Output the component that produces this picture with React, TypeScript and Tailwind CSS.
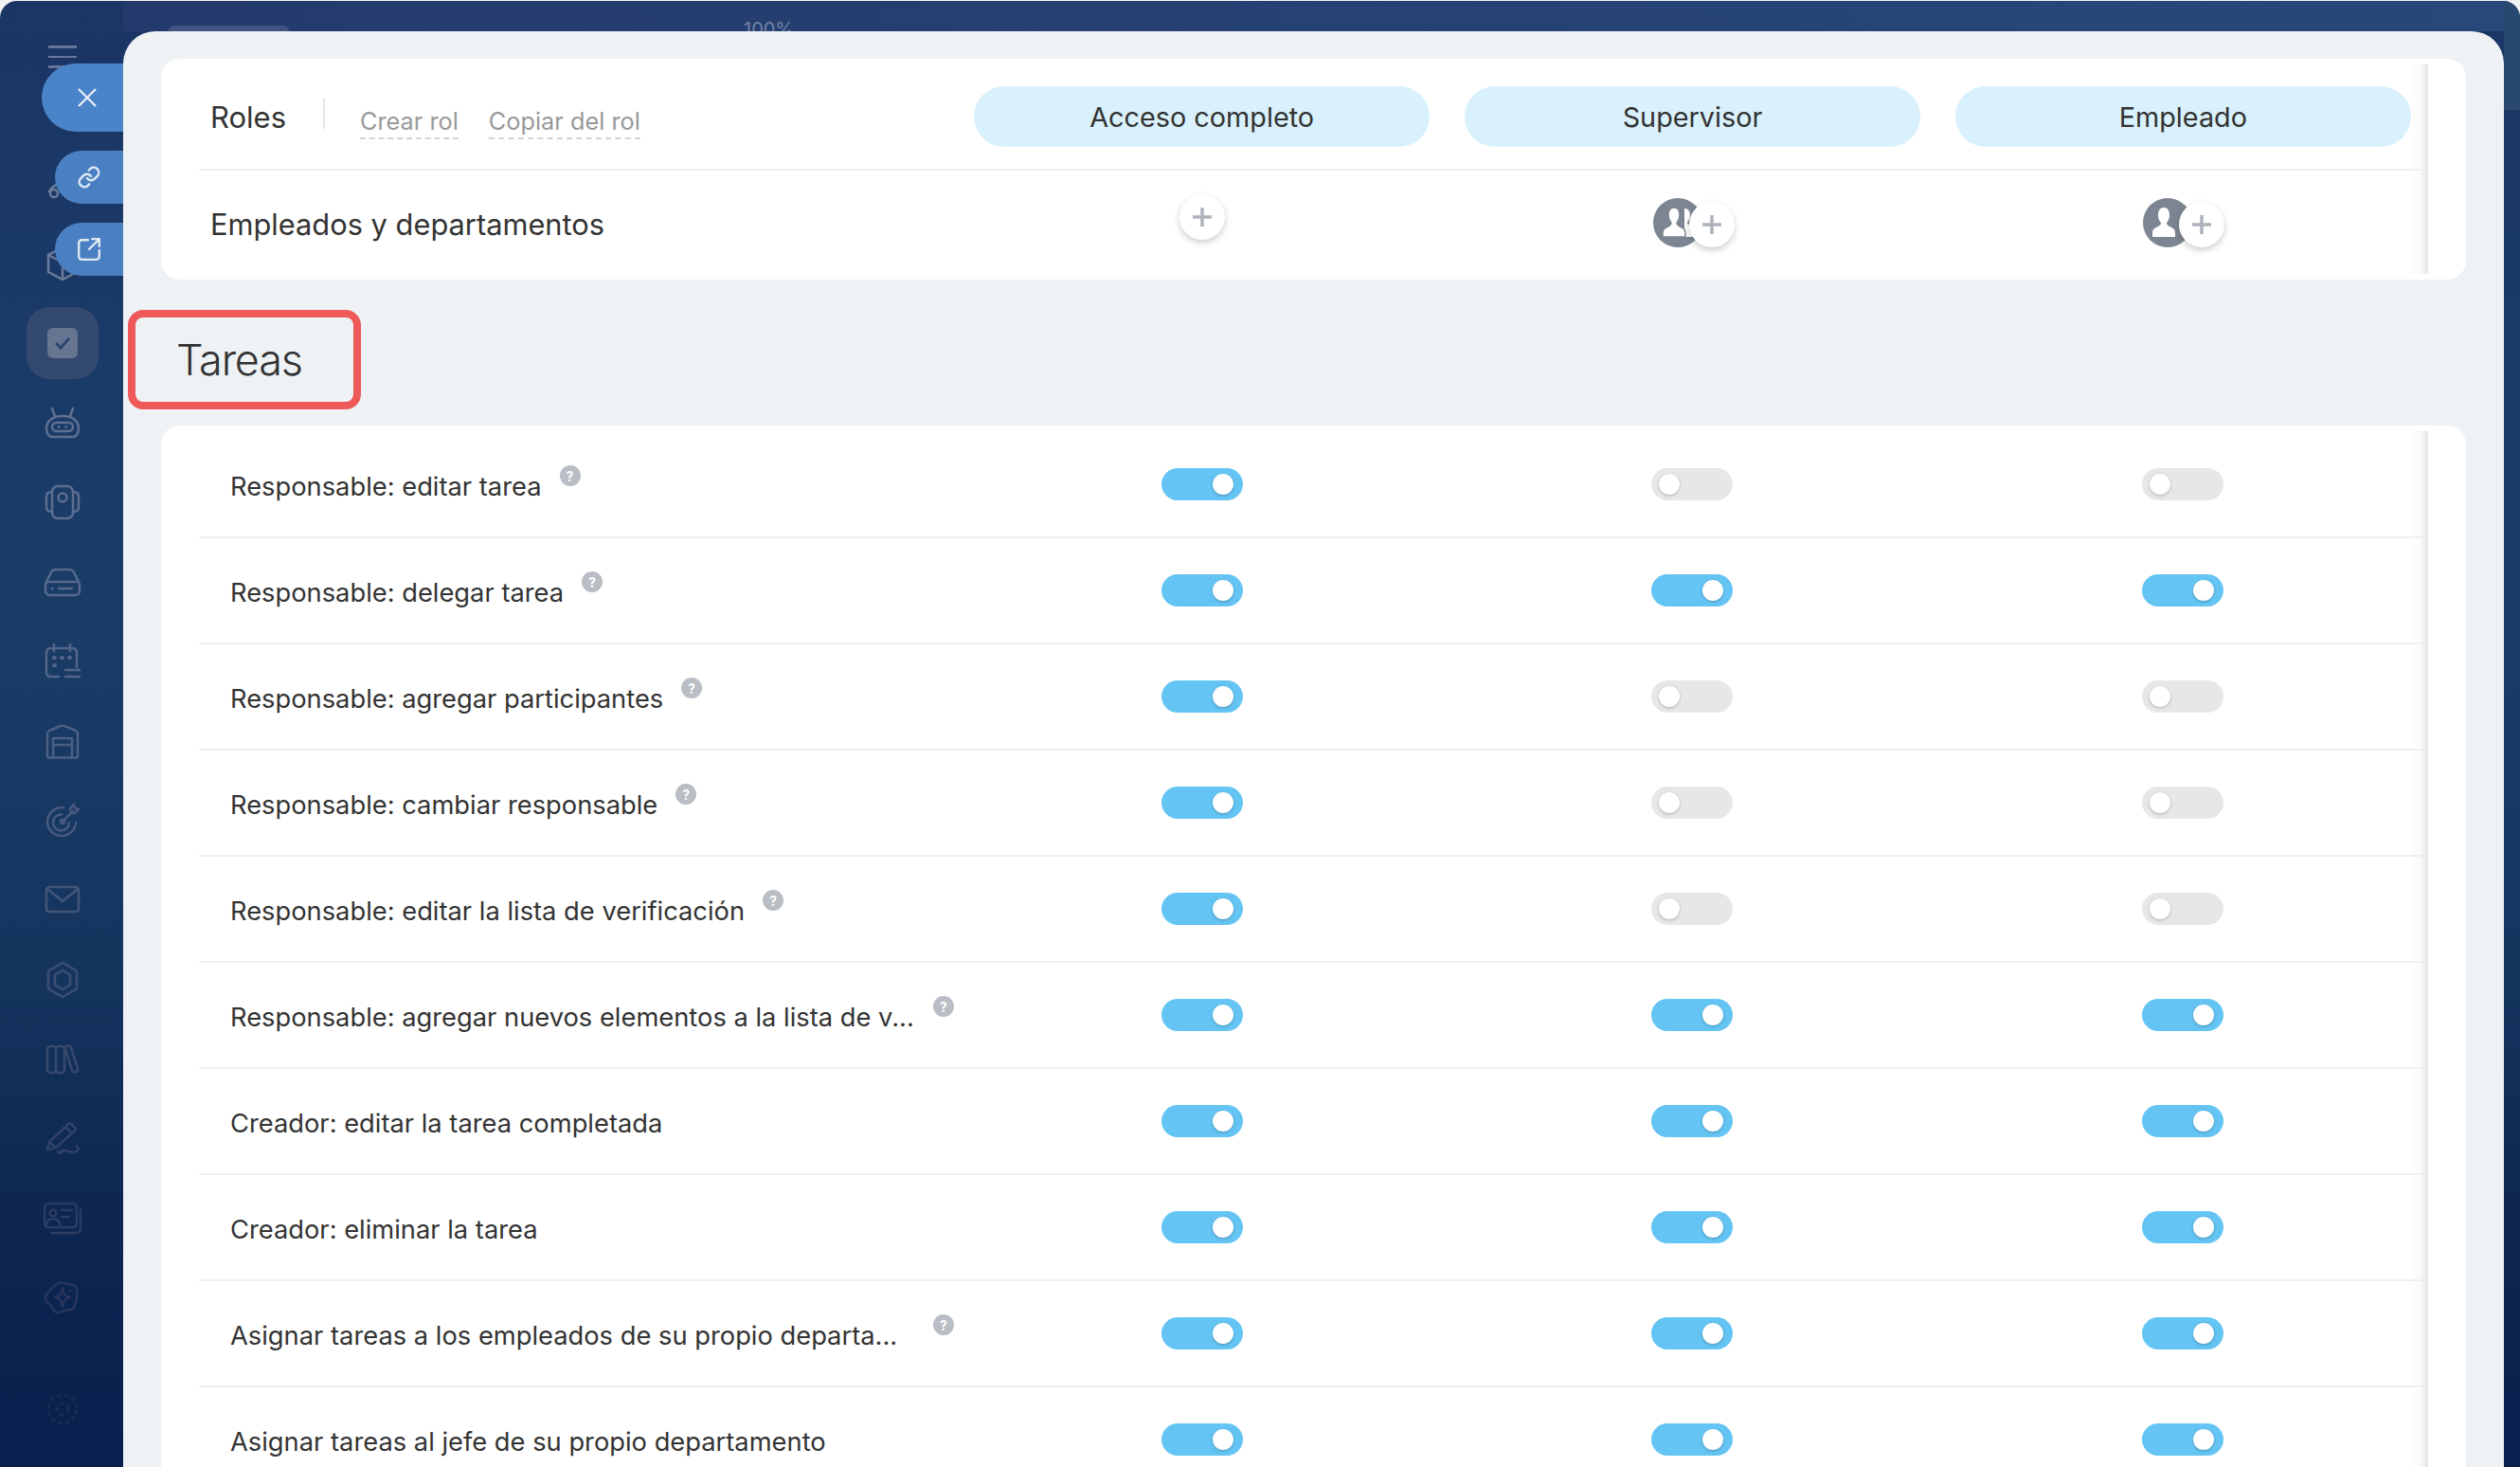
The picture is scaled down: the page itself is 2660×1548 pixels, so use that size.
import type { ReactNode } from "react";

const rows = [
  { label: "Responsable: editar tarea", help: true, cut: false, on: [true, false, false] },
  { label: "Responsable: delegar tarea", help: true, cut: false, on: [true, true, true] },
  { label: "Responsable: agregar participantes", help: true, cut: false, on: [true, false, false] },
  { label: "Responsable: cambiar responsable", help: true, cut: false, on: [true, false, false] },
  { label: "Responsable: editar la lista de verificación", help: true, cut: false, on: [true, false, false] },
  { label: "Responsable: agregar nuevos elementos a la lista de v...", help: true, cut: true, on: [true, true, true] },
  { label: "Creador: editar la tarea completada", help: false, cut: false, on: [true, true, true] },
  { label: "Creador: eliminar la tarea", help: false, cut: false, on: [true, true, true] },
  { label: "Asignar tareas a los empleados de su propio departa...", help: true, cut: true, on: [true, true, true] },
  { label: "Asignar tareas al jefe de su propio departamento", help: false, cut: false, on: [true, true, true] },
];

const navIcons: { color: string; node: ReactNode }[] = [
  {
    color: "text-[#6b7b9b]",
    node: (
      <>
        <path d="M6 28a16 16 0 0 1 28 0" />
        <circle cx="11" cy="30" r="4" />
        <circle cx="29" cy="30" r="4" />
      </>
    ),
  },
  {
    color: "text-[#6b7b9b]",
    node: (
      <>
        <path d="M20 3l15 8v18l-15 8-15-8V11z" />
        <path d="M5 11l15 8 15-8M20 19v18" />
      </>
    ),
  },
  { color: "", node: null },
  {
    color: "text-[#5f7091]",
    node: (
      <>
        <path d="M9 5l3 8M31 5l-3 8" />
        <path d="M3 26c0-8 7-13 17-13s17 5 17 13c0 6-3 9-6 9H9c-3 0-6-3-6-9z" />
        <rect x="9" y="20" width="22" height="9" rx="4.5" />
        <path d="M16 24.5h.5M23.5 24.5h.5" />
      </>
    ),
  },
  {
    color: "text-[#5c6e90]",
    node: (
      <>
        <rect x="9" y="3" width="22" height="34" rx="6" />
        <circle cx="20" cy="15" r="4.5" />
        <path d="M9 9C5 9 3 11 3 14v11c0 3 2 5 6 5M31 9c4 0 6 2 6 5v11c0 3-2 5-6 5" />
      </>
    ),
  },
  {
    color: "text-[#56698c]",
    node: (
      <>
        <path d="M2 24c0-2 .5-3 1.500-5L8 10c1-2 2.500-3 5-3h14c2.500 0 4 1 5 3l4.500 9c1 2 1.500 3 1.500 5v5c0 3-2 5-5 5H7c-3 0-5-2-5-5z" />
        <path d="M3 20h34" />
        <path d="M9 27h.5M16 27h14" />
      </>
    ),
  },
  {
    color: "text-[#52658a]",
    node: (
      <>
        <path d="M16 36H7c-2 0-4-2-4-4V10c0-2 2-4 4-4h24c2 0 4 2 4 4v16" />
        <path d="M11 2v7M28 2v7" />
        <path d="M11 16h1M19 16h1M27 16h1M11 24h1" strokeWidth="4" />
        <path d="M23 29h15M23 36h15" />
      </>
    ),
  },
  {
    color: "text-[#4c5f84]",
    node: (
      <>
        <path d="M4 36V12c0-1 .5-2 2-3l12-5c1.500-.5 2.500-.5 4 0l12 5c1.500 1 2 2 2 3v24c0 1-.5 1.500-1.500 1.500h-29C4.500 37.500 4 37 4 36z" />
        <path d="M10 37V17h20v20M10 24h20" />
      </>
    ),
  },
  {
    color: "text-[#47597e]",
    node: (
      <>
        <path d="M32 20a15 15 0 1 1-13-15.800" transform="translate(2 2)" />
        <path d="M27 22a8.500 8.500 0 1 1-8-8.500" />
        <circle cx="20" cy="21" r="2" />
        <path d="M20 21L31 10M29 12l-1-5 4-4 1 4 4 1-4 4z" />
      </>
    ),
  },
  {
    color: "text-[#435579]",
    node: (
      <>
        <rect x="3" y="6" width="34" height="26" rx="3" />
        <path d="M4 8l16 13L36 8" />
      </>
    ),
  },
  {
    color: "text-[#3d4e73]",
    node: (
      <>
        <path d="M20 2l15 8.500v19L20 38 5 29.500v-19z" strokeLinejoin="round" />
        <path d="M20 10l8 4.500v11L20 30l-8-4.500v-11z" />
      </>
    ),
  },
  {
    color: "text-[#37486d]",
    node: (
      <>
        <rect x="4" y="6" width="9" height="28" rx="3" />
        <rect x="13" y="6" width="9" height="28" rx="3" />
        <path d="M23 9c-.5-2 .5-3 2-3.500 2-.5 3.500 0 4 2l7 22c.5 2-.5 3-2 3.500-2 .5-3.500 0-4-2z" />
      </>
    ),
  },
  {
    color: "text-[#324267]",
    node: (
      <>
        <path d="M4 31l2-8L26 4c1-1 2-1 3 0l4 4c1 1 1 2 0 3L13 29z" />
        <path d="M23 7l7 7M6 23l7 6" />
        <path d="M15 33c2 3 4 2 4 0 0-2 4-1 7 0s8 1 10-1-1-4-1-5" />
      </>
    ),
  },
  {
    color: "text-[#2d3c61]",
    node: (
      <>
        <rect x="1" y="4" width="34" height="25" rx="4" />
        <path d="M39 10v20c0 3-2 5-5 5H9" />
        <circle cx="10" cy="14" r="3.500" />
        <path d="M3 27c0-6 4-7 7-7s7 1 7 7" />
        <path d="M19 11h11M19 18h7" />
      </>
    ),
  },
  {
    color: "text-[#28365b]",
    node: (
      <>
        <path d="M15 4c4-2 7 1 11 1 5 0 9 1 9 6s1 9-1 13-1 8-7 8-9 4-13 3-4-6-8-9-6-7-3-10 8-10 12-12z" />
        <path d="M20 9c1 7 3 9 8 10-5 1-7 3-8 10-1-7-3-9-8-10 5-1 7-3 8-10z" />
        <path d="M28 12h.5" />
      </>
    ),
  },
];

function Toggle({ on }: { on: boolean }) {
  return (
    <div className={`flex h-[34px] w-[86px] items-center rounded-full ${on ? "justify-end bg-[#64c4f3] pr-[10px]" : "justify-start bg-[#e6e7e9] pl-[8px]"}`}>
      <div className="h-[22px] w-[22px] rounded-full bg-white shadow-[0_1px_3px_rgba(0,0,0,0.25)]" />
    </div>
  );
}

function PlusButton() {
  return (
    <div className="relative flex h-[48px] w-[48px] items-center justify-center rounded-full bg-white shadow-[0_3px_7px_rgba(0,0,0,0.2)]">
      <svg width="22" height="22" viewBox="0 0 22 22">
        <path d="M11 1v20M1 11h20" stroke="#aeb2ba" strokeWidth="3.500" />
      </svg>
    </div>
  );
}

function Avatar({ group }: { group?: boolean }) {
  return (
    <div className="flex h-[52px] w-[52px] items-center justify-center overflow-hidden rounded-full bg-[#7d8592]">
      <svg width="52" height="52" viewBox="0 0 52 52" fill="white">
        {group && <path d="M33 11c4 0 6 3 6 7 0 3-1 6-3 7 0 2 1 3 4 4l6 3v9H33z" />}
        <path d="M22 10c4 0 6 3 6 8 0 3-1 6-3 8 0 2 1 3 5 5 3 1 4 3 4 6v4H10v-4c0-3 1-5 4-6 4-2 5-3 5-5-2-2-3-5-3-8 0-5 2-8 6-8z" stroke="#7d8592" strokeWidth={group ? 1.500 : 0} />
      </svg>
    </div>
  );
}

function EdgeShade() {
  return <div className="absolute right-[40px] top-[6px] bottom-[6px] w-[20px] bg-[linear-gradient(90deg,transparent,#fafafa_60%,#e4e4e4)]" />;
}

export default function App() {
  return (
    <div className="h-[1548px] w-[2660px] overflow-hidden bg-[#f2f2f2] pt-[1px] font-['Inter',sans-serif] text-[#333]">
      <div className="relative flex h-[1547px] overflow-hidden rounded-t-[18px] bg-[linear-gradient(180deg,#1b3565_0%,#1a3d68_38%,#15355f_65%,#0d2752_82%,#0a1f4d_100%)]">
        {/* Sidebar */}
        <aside className="flex w-[130px] shrink-0 flex-col items-center pl-[2px] pt-[47px]">
          <div className="flex h-[104px] w-[30px] flex-col gap-[8px]">
            <div className="h-[2.500px] w-full bg-[#66769a]" />
            <div className="h-[2.500px] w-full bg-[#66769a]" />
            <div className="h-[2.500px] w-full bg-[#66769a]" />
          </div>
          {navIcons.map((icon, i) =>
            icon.node ? (
              <div key={i} className="flex h-[84px] items-center justify-center">
                <svg width="40" height="40" viewBox="0 0 40 40" fill="none" stroke="currentColor" strokeWidth="2.500" strokeLinecap="round" strokeLinejoin="round" className={icon.color}>
                  {icon.node}
                </svg>
              </div>
            ) : (
              <div key={i} className="flex h-[84px] items-center justify-center">
                <div className="flex h-[76px] w-[76px] items-center justify-center rounded-[24px] bg-[#34496f]">
                  <div className="flex h-[32px] w-[32px] items-center justify-center rounded-[6px] bg-[#667590]">
                    <svg width="18" height="14" viewBox="0 0 18 14" fill="none" stroke="#2f4570" strokeWidth="3">
                      <path d="M2 7l5 5 9-10" />
                    </svg>
                  </div>
                </div>
              </div>
            )
          )}
          <div className="mt-[45px] flex h-[60px] items-center justify-center">
            <svg width="36" height="36" viewBox="0 0 36 36" fill="none" stroke="#1c2c55" strokeWidth="2.500" strokeDasharray="5 3">
              <circle cx="18" cy="18" r="15" />
              <circle cx="18" cy="18" r="6" />
            </svg>
          </div>
        </aside>

        {/* floating side buttons */}
        <div className="absolute left-[44px] top-[66px] flex h-[72px] w-[86px] items-center rounded-l-full bg-[#4a84c8] pl-[37px]">
          <svg width="22" height="22" viewBox="0 0 22 22" stroke="#eaf1f9" strokeWidth="2.200">
            <path d="M2 2l18 18M20 2L2 20" />
          </svg>
        </div>
        <div className="absolute left-[58px] top-[158px] flex h-[56px] w-[72px] items-center rounded-l-full bg-[#4a80c1] pl-[23px]">
          <svg width="26" height="26" viewBox="0 0 24 24" fill="none" stroke="#dfe9f5" strokeWidth="2.200" strokeLinecap="round" strokeLinejoin="round">
            <path d="M10 13a5 5 0 0 0 7.500.5l3-3a5 5 0 0 0-7-7l-1.700 1.700" />
            <path d="M14 11a5 5 0 0 0-7.500-.5l-3 3a5 5 0 0 0 7 7l1.700-1.700" />
          </svg>
        </div>
        <div className="absolute left-[58px] top-[234px] flex h-[56px] w-[72px] items-center rounded-l-full bg-[#4a80c1] pl-[23px]">
          <svg width="26" height="26" viewBox="0 0 24 24" fill="none" stroke="#dfe9f5" strokeWidth="2.200" strokeLinecap="round" strokeLinejoin="round">
            <path d="M11 3H5a3 3 0 0 0-3 3v13a3 3 0 0 0 3 3h14a3 3 0 0 0 3-3v-6" />
            <path d="M15 2h7v7M22 2L12 12" />
          </svg>
        </div>

        {/* Main column */}
        <div className="flex w-[2513px] shrink-0 flex-col">
          <div className="flex h-[32px] shrink-0 items-end overflow-hidden bg-[linear-gradient(90deg,#243a6c,#28487a)]">
            <div className="ml-[48px] h-[6px] w-[127px] rounded-t-[12px] bg-[#3f5580]" />
            <span className="mb-[-10px] ml-[480px] text-[20px] leading-[24px] text-[#7383a3]">100%</span>
          </div>

          <main className="flex-1 rounded-t-[34px] bg-[#eef2f5] px-[40px] pt-[29px]">
            {/* Roles card */}
            <section className="relative h-[233px] rounded-[20px] bg-white px-[40px]">
              <EdgeShade />
              <div className="relative flex h-[118px] items-center border-b-2 border-[#efefef]">
                <div className="flex w-[818px] shrink-0 items-center pl-[12px]">
                  <span className="mt-[9px] text-[31px]">Roles</span>
                  <div className="ml-[39px] h-[32px] w-[2px] bg-[#e5e5e5]" />
                  <span className="ml-[37px] mt-[17px] border-b-2 border-dashed border-[#d3d3d3] text-[25.300px] leading-[34px] text-[#999]">Crear rol</span>
                  <span className="ml-[32px] mt-[17px] border-b-2 border-dashed border-[#d3d3d3] text-[25.300px] leading-[34px] text-[#999]">Copiar del rol</span>
                </div>
                <div className="mt-[6px] grid w-[1517px] grid-cols-3 gap-x-[36.500px]">
                  {["Acceso completo", "Supervisor", "Empleado"].map((name) => (
                    <div key={name} className="flex h-[64px] items-center justify-center rounded-full bg-[#d9f1fc] pt-[2px] text-[28.800px]">
                      {name}
                    </div>
                  ))}
                </div>
              </div>
              <div className="relative flex h-[115px] items-center">
                <div className="w-[818px] shrink-0 pl-[12px] text-[30.800px]">Empleados y departamentos</div>
                <div className="grid w-[1517px] grid-cols-3 gap-x-[36.500px]">
                  <div className="-mt-[9px] flex justify-center">
                    <PlusButton />
                  </div>
                  <div className="-mt-[5px] ml-[3px] flex justify-center">
                    <Avatar group />
                    <div className="-ml-[14px] mt-[4px]">
                      <PlusButton />
                    </div>
                  </div>
                  <div className="-mt-[5px] ml-[2px] flex justify-center">
                    <Avatar />
                    <div className="-ml-[14px] mt-[4px]">
                      <PlusButton />
                    </div>
                  </div>
                </div>
              </div>
            </section>

            {/* Section title */}
            <div className="relative flex h-[154px] items-center pl-[16px] pt-[15px] text-[45px] font-light tracking-[-1.200px]">
              Tareas
              <div className="absolute left-[-35px] top-[32px] h-[105px] w-[246px] rounded-[16px] border-[8px] border-[#ee5a5a]" />
            </div>

            {/* Permissions table */}
            <section className="relative rounded-t-[20px] bg-white px-[40px] pt-[7px]">
              <EdgeShade />
              {rows.map((row) => (
                <div key={row.label} className="relative flex h-[112px] items-center border-b-2 border-[#efefef]">
                  <div className="flex w-[818px] shrink-0 items-center pl-[33px]">
                    <span className={`mt-[7px] whitespace-nowrap text-[27.300px] ${row.cut ? "w-[723px]" : ""}`}>{row.label}</span>
                    {row.help && (
                      <span className="mb-[18px] ml-[19px] flex h-[22px] w-[22px] items-center justify-center rounded-full bg-[#b9bdc4] text-[14px] font-bold text-white">?</span>
                    )}
                  </div>
                  <div className="grid w-[1517px] grid-cols-3 gap-x-[36.500px]">
                    {row.on.map((on, i) => (
                      <div key={i} className="flex justify-center">
                        <Toggle on={on} />
                      </div>
                    ))}
                  </div>
                </div>
              ))}
            </section>
          </main>
        </div>

        {/* Right edge */}
        <div className="h-[115px] flex-1 bg-[#28486f]" />
      </div>
    </div>
  );
}
